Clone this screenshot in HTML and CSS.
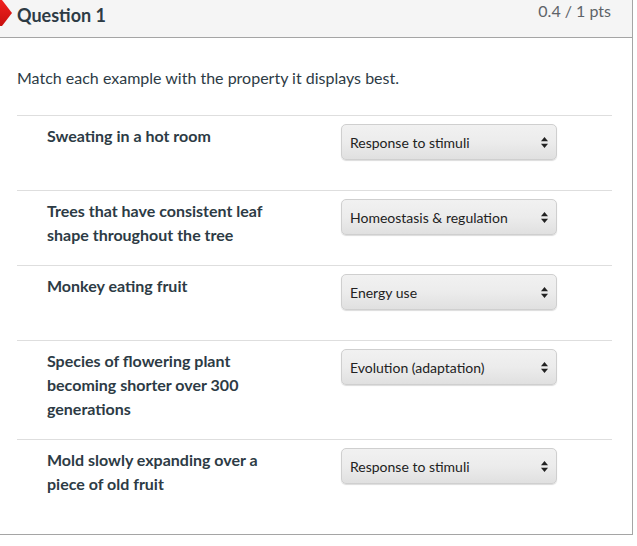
FILE: index.html
```html
<!DOCTYPE html>
<html>
<head>
<meta charset="utf-8">
<link rel="stylesheet" href="styles.css">
</head>
<body>
<div class="quiz">
  <div class="header">
    <svg class="marker" width="14" height="28" viewBox="0 0 14 28">
      <defs>
        <linearGradient id="rg" x1="0" y1="0" x2="0" y2="1">
          <stop offset="0" stop-color="#f0201e"/>
          <stop offset="1" stop-color="#c8100e"/>
        </linearGradient>
      </defs>
      <polygon points="0,0 2,0 12,13 2,26 0,26" fill="url(#rg)"/>
    </svg>
    <div class="title">Question 1</div>
    <div class="pts">0.4 / 1 pts</div>
  </div>
  <div class="content">
    <p class="prompt">Match each example with the property it displays best.</p>
    <div class="rows">
      <div class="row">
        <div class="label">Sweating in a hot room</div>
        <div class="select"><span>Response to stimuli</span><svg class="arrows" width="7" height="11" viewBox="0 0 7 11"><polygon points="3.5,0 7,4.3 0,4.3" /><polygon points="0,6.7 7,6.7 3.5,11" /></svg></div>
      </div>
      <div class="row">
        <div class="label">Trees that have consistent leaf shape throughout the tree</div>
        <div class="select"><span>Homeostasis &amp; regulation</span><svg class="arrows" width="7" height="11" viewBox="0 0 7 11"><polygon points="3.5,0 7,4.3 0,4.3" /><polygon points="0,6.7 7,6.7 3.5,11" /></svg></div>
      </div>
      <div class="row">
        <div class="label">Monkey eating fruit</div>
        <div class="select"><span>Energy use</span><svg class="arrows" width="7" height="11" viewBox="0 0 7 11"><polygon points="3.5,0 7,4.3 0,4.3" /><polygon points="0,6.7 7,6.7 3.5,11" /></svg></div>
      </div>
      <div class="row">
        <div class="label">Species of flowering plant becoming shorter over 300 generations</div>
        <div class="select"><span>Evolution (adaptation)</span><svg class="arrows" width="7" height="11" viewBox="0 0 7 11"><polygon points="3.5,0 7,4.3 0,4.3" /><polygon points="0,6.7 7,6.7 3.5,11" /></svg></div>
      </div>
      <div class="row">
        <div class="label">Mold slowly expanding over a piece of old fruit</div>
        <div class="select"><span>Response to stimuli</span><svg class="arrows" width="7" height="11" viewBox="0 0 7 11"><polygon points="3.5,0 7,4.3 0,4.3" /><polygon points="0,6.7 7,6.7 3.5,11" /></svg></div>
      </div>
    </div>
  </div>
</div>
</body>
</html>
```

FILE: styles.css
```css
html, body {
  margin: 0;
  padding: 0;
  background: #fff;
}
body {
  font-family: Lato, "Open Sans", sans-serif;
  color: #2d3b45;
}
.quiz {
  width: 632px;
  border-right: 1px solid #a5a5a5;
  border-bottom: 1px solid #a5a5a5;
}
.header {
  position: relative;
  height: 37px;
  background: #f5f5f5;
  border-bottom: 1px solid #a5a5a5;
  display: flex;
  justify-content: space-between;
  align-items: flex-start;
  padding: 0 21px 0 17px;
}
.marker {
  position: absolute;
  left: 0;
  top: 0;
}
.title {
  font-size: 18px;
  font-weight: 700;
  line-height: 24px;
  padding-top: 3px;
  color: #2d3b45;
}
.pts {
  font-size: 16px;
  line-height: 20px;
  padding-top: 1px;
  color: #5e6368;
}
.content {
  padding: 28px 20px 20px 17px;
}
.prompt {
  margin: 0 0 25px 0;
  font-size: 16px;
  line-height: 24px;
}
.row {
  display: flex;
  align-items: flex-start;
  border-top: 1px solid #dedede;
  padding: 8px 0 18px 30px;
}
.label {
  width: 240px;
  margin-right: 54px;
  font-size: 16px;
  font-weight: 700;
  line-height: 24px;
  color: #2d3b45;
}
.select {
  box-sizing: border-box;
  width: 216px;
  height: 36px;
  margin-bottom: 12px;
  display: flex;
  align-items: center;
  justify-content: space-between;
  padding: 1px 8px 0 8px;
  border: 1px solid #cfcfcf;
  border-radius: 5px;
  background: linear-gradient(to bottom, #f1f1f1 0%, #ececec 50%, #e0e0e0 100%);
  box-shadow: 0 1px 1px rgba(0,0,0,0.14);
  font-size: 14px;
  color: #222;
}
.arrows {
  fill: #222;
}
```
